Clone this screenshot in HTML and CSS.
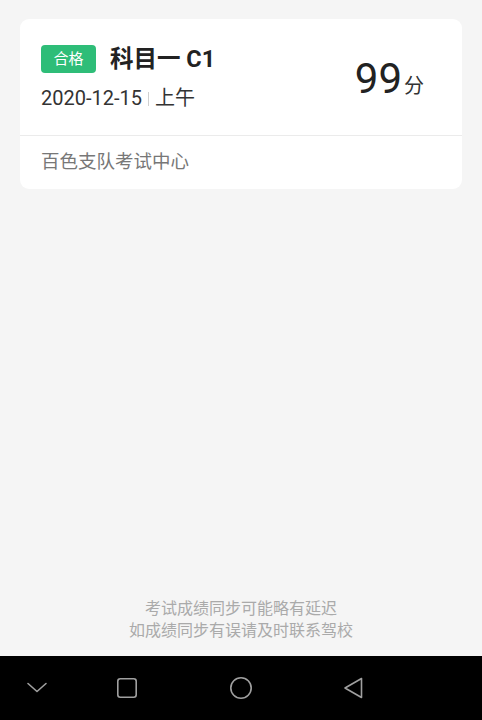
FILE: index.html
```html
<!DOCTYPE html>
<html lang="zh">
<head>
<meta charset="utf-8">
<link rel="stylesheet" href="styles.css">
</head>
<body>
<div class="screen">
  <main class="content">
    <section class="card">
      <div class="card-top">
        <div class="info">
          <div class="title-row">
            <span class="badge">合格</span>
            <span class="title">科目一 C1</span>
          </div>
          <div class="date-row">
            <span class="date">2020-12-15</span>
            <span class="sep"></span>
            <span class="period">上午</span>
          </div>
        </div>
        <div class="score"><span class="num">99</span><span class="unit">分</span></div>
      </div>
      <div class="card-bottom">百色支队考试中心</div>
    </section>
  </main>
  <footer class="note">
    <p>考试成绩同步可能略有延迟</p>
    <p>如成绩同步有误请及时联系驾校</p>
  </footer>
  <nav class="navbar">
    <svg class="nav-icon i-down" width="24" height="24" viewBox="0 0 24 24"><path d="M3 7.5 L12 15.5 L21 7.5" fill="none" stroke="#a0a0a0" stroke-width="1.6" stroke-linecap="round" stroke-linejoin="round"/></svg>
    <svg class="nav-icon i-square" width="24" height="24" viewBox="0 0 24 24"><rect x="2.8" y="2.8" width="18.4" height="18.4" rx="2.5" fill="none" stroke="#a0a0a0" stroke-width="1.6"/></svg>
    <svg class="nav-icon i-circle" width="24" height="24" viewBox="0 0 24 24"><circle cx="12" cy="12" r="10.2" fill="none" stroke="#a0a0a0" stroke-width="1.6"/></svg>
    <svg class="nav-icon i-back" width="24" height="24" viewBox="0 0 24 24"><path d="M20.5 2.5 L20.5 21.5 L4 12 Z" fill="none" stroke="#a0a0a0" stroke-width="1.6" stroke-linejoin="round"/></svg>
  </nav>
</div>
</body>
</html>
```

FILE: styles.css
```css
* { box-sizing: border-box; }
html, body { margin: 0; padding: 0; }
body {
  background: #f5f5f5;
  font-family: Roboto, "Noto Sans CJK SC", sans-serif;
  color: #222;
}
.screen {
  width: 482px;
  height: 720px;
  display: flex;
  flex-direction: column;
}
.content {
  flex: 1;
  padding: 19px 20px 0 20px;
}
.card {
  background: #fff;
  border-radius: 9px;
  width: 442px;
}
.card-top {
  display: flex;
  align-items: center;
  justify-content: space-between;
  padding: 26px 38px 25px 21px;
  border-bottom: 1px solid #ebebeb;
}
.info {
  display: flex;
  flex-direction: column;
  gap: 13px;
}
.title-row {
  display: flex;
  align-items: center;
  height: 28px;
}
.badge {
  width: 55px;
  height: 28px;
  border-radius: 4px;
  background: #2ebd78;
  color: #fff;
  font-size: 15px;
  line-height: 28px;
  text-align: center;
}
.title {
  margin-left: 14px;
  font-size: 23.5px;
  font-weight: 700;
  line-height: 28px;
  color: #222;
}
.date-row {
  display: flex;
  align-items: center;
  height: 24px;
  color: #333;
}
.date {
  font-size: 20px;
  line-height: 24px;
}
.sep {
  width: 1px;
  height: 14px;
  background: #d0d0d0;
  margin: 2px 6px 0 6px;
}
.period {
  font-size: 20px;
  line-height: 24px;
}
.score {
  display: flex;
  align-items: baseline;
  color: #222;
  margin-top: 2px;
}
.num {
  font-size: 42px;
  line-height: 44px;
}
.unit {
  font-size: 20px;
  margin-left: 2px;
  color: #333;
}
.card-bottom {
  height: 53px;
  line-height: 53px;
  padding-left: 21px;
  font-size: 18.5px;
  color: #777;
}
.note {
  padding-bottom: 14px;
  text-align: center;
  color: #aaa;
  font-size: 16px;
  line-height: 22px;
}
.note p { margin: 0; }
.navbar {
  height: 64px;
  background: #000;
  display: flex;
  align-items: center;
  padding-left: 25px;
}
.nav-icon { display: block; flex: none; }
.i-square { margin-left: 66px; }
.i-circle { margin-left: 90px; }
.i-back { margin-left: 88px; }
```
